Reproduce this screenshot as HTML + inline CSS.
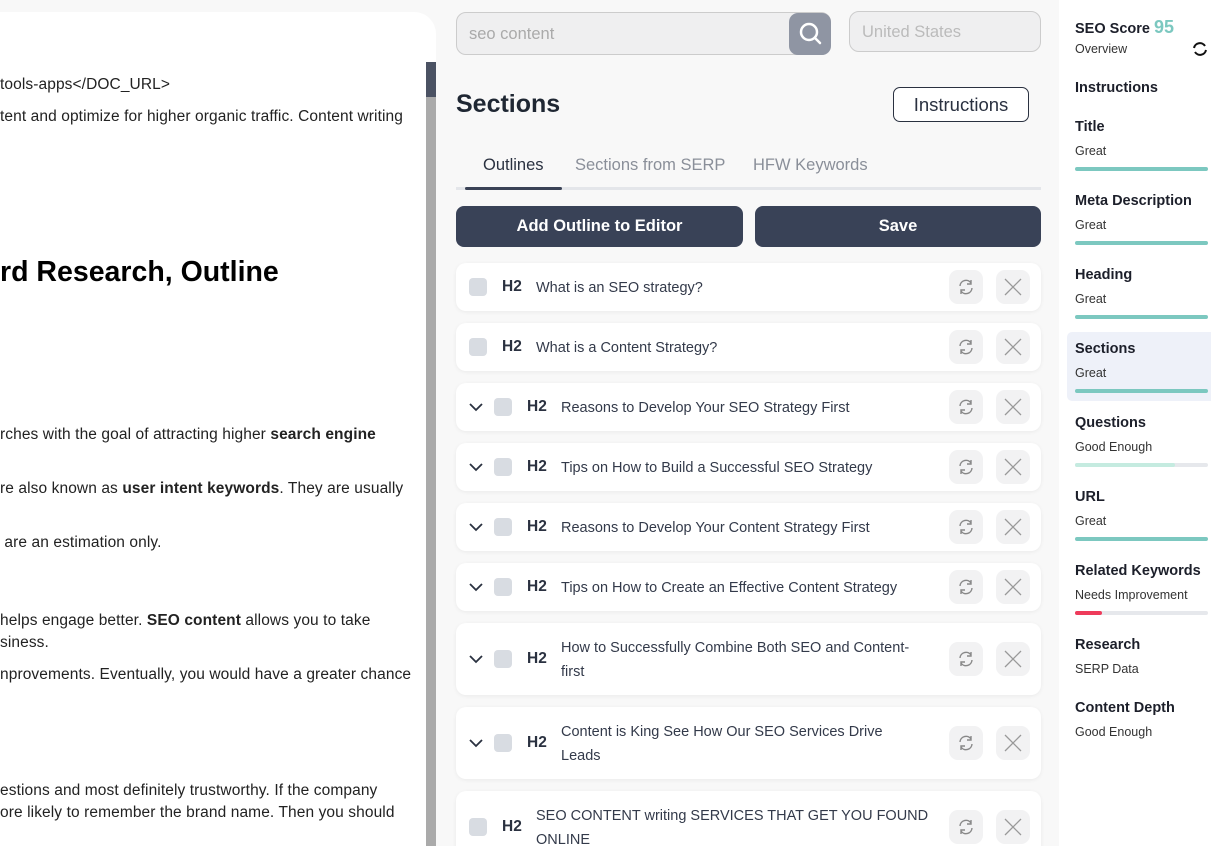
<!DOCTYPE html>
<html style="overflow:hidden;width:1211px;height:846px"><head><meta charset="utf-8"><style>
*{box-sizing:border-box;margin:0;padding:0}
body{width:1211px;height:846px;overflow:hidden;background:#f8f8f8;font-family:"Liberation Sans",sans-serif;position:relative;color:#1f2430}
.a{position:absolute;white-space:nowrap}
.doc{position:absolute;left:0;top:12px;width:436px;height:834px;background:#fff;border-top-right-radius:22px;overflow:hidden}
.p{position:absolute;left:0;font-size:15.5px;letter-spacing:0.1px;color:#222;white-space:nowrap}
.row{position:absolute;left:456px;width:585px;background:#fff;border-radius:10px;box-shadow:0 1px 4px rgba(0,0,0,.06)}
.cb{position:absolute;width:18px;height:18px;background:#d8dce2;border-radius:4px}
.h2{position:absolute;font-weight:bold;font-size:15.5px;color:#2a3140}
.t{position:absolute;font-size:14.5px;color:#333a4a;line-height:24px}
.sb{position:absolute;left:1075px;font-size:14.5px;font-weight:bold;color:#1c1f2a}
.ss{position:absolute;left:1075px;font-size:12.5px;color:#333}
.bar{position:absolute;left:1075px;width:133px;height:4px;border-radius:2px;background:#e6e8ec}
</style></head><body>
<div class="doc">
 <div style="position:absolute;left:426px;top:50px;width:10px;height:800px;background:#aaa"></div>
 <div style="position:absolute;left:426px;top:50px;width:10px;height:35px;background:#4b5263"></div>
 <div class="p" style="top:64px">tools-apps&lt;/DOC_URL&gt;</div>
 <div class="p" style="top:96px">tent and optimize for higher organic traffic. Content writing</div>
 <div class="p" style="top:244px;font-size:28.5px;font-weight:bold;color:#000;letter-spacing:0">rd Research, Outline</div>
 <div class="p" style="top:414px">rches with the goal of attracting higher <b>search engine</b></div>
 <div class="p" style="top:468px">re also known as <b>user intent keywords</b>. They are usually</div>
 <div class="p" style="top:522px">&nbsp;are an estimation only.</div>
 <div class="p" style="top:600px">helps engage better. <b>SEO content</b> allows you to take</div>
 <div class="p" style="top:622px">siness.</div>
 <div class="p" style="top:654px">nprovements. Eventually, you would have a greater chance</div>
 <div class="p" style="top:770px">estions and most definitely trustworthy. If the company</div>
 <div class="p" style="top:792px">ore likely to remember the brand name. Then you should</div>
</div>

<div class="a" style="left:456px;top:12px;width:375px;height:43px;background:#efeff0;border:1px solid #ccc;border-radius:10px"></div>
<div class="a" style="left:469px;top:25px;font-size:16.5px;color:#aaa">seo content</div>
<div class="a" style="left:789px;top:13px;width:42px;height:42px;background:#8f95a3;border-radius:9px"><svg width="42" height="42"><circle cx="20" cy="19" r="8" fill="none" stroke="#fff" stroke-width="2.5"/><path d="M26 25l5 5" stroke="#fff" stroke-width="2.5" stroke-linecap="round"/></svg></div>
<div class="a" style="left:849px;top:11px;width:192px;height:41px;background:#efeff0;border:1px solid #ccc;border-radius:10px"></div>
<div class="a" style="left:862px;top:23px;font-size:16.5px;color:#bbb">United States</div>

<div class="a" style="left:456px;top:90px;font-size:25px;font-weight:bold;color:#1f2733">Sections</div>
<div class="a" style="left:893px;top:87px;width:136px;height:35px;border:1px solid #2a3140;border-radius:7px;font-size:18.5px;color:#2a3140;text-align:center;line-height:33px;background:#fff">Instructions</div>

<div class="a" style="left:483px;top:156px;font-size:16.5px;color:#2a3140">Outlines</div>
<div class="a" style="left:575px;top:156px;font-size:16.5px;color:#8a8f99">Sections from SERP</div>
<div class="a" style="left:753px;top:156px;font-size:16.5px;color:#8a8f99">HFW Keywords</div>
<div class="a" style="left:456px;top:187px;width:585px;height:3px;background:#e4e6ea"></div>
<div class="a" style="left:465px;top:187px;width:97px;height:3px;background:#3a4256;border-radius:2px"></div>

<div class="a" style="left:456px;top:206px;width:287px;height:41px;background:#394257;border-radius:8px;color:#fff;font-size:16.5px;font-weight:bold;text-align:center;line-height:41px">Add Outline to Editor</div>
<div class="a" style="left:755px;top:206px;width:286px;height:41px;background:#394257;border-radius:8px;color:#fff;font-size:16.5px;font-weight:bold;text-align:center;line-height:41px">Save</div>

<div class="row" style="top:263px;height:48px"><div class="cb" style="left:13px;top:15px"></div><div class="h2" style="left:46px;top:15px">H2</div><div class="t" style="left:80px;top:13px">What is an SEO strategy?</div></div>
<div class="row" style="top:323px;height:48px"><div class="cb" style="left:13px;top:15px"></div><div class="h2" style="left:46px;top:15px">H2</div><div class="t" style="left:80px;top:13px">What is a Content Strategy?</div></div>
<div class="row" style="top:383px;height:48px"><div class="cb" style="left:38px;top:15px"></div><div class="h2" style="left:71px;top:15px">H2</div><div class="t" style="left:105px;top:13px">Reasons to Develop Your SEO Strategy First</div></div>
<div class="row" style="top:443px;height:48px"><div class="cb" style="left:38px;top:15px"></div><div class="h2" style="left:71px;top:15px">H2</div><div class="t" style="left:105px;top:13px">Tips on How to Build a Successful SEO Strategy</div></div>
<div class="row" style="top:503px;height:48px"><div class="cb" style="left:38px;top:15px"></div><div class="h2" style="left:71px;top:15px">H2</div><div class="t" style="left:105px;top:13px">Reasons to Develop Your Content Strategy First</div></div>
<div class="row" style="top:563px;height:48px"><div class="cb" style="left:38px;top:15px"></div><div class="h2" style="left:71px;top:15px">H2</div><div class="t" style="left:105px;top:13px">Tips on How to Create an Effective Content Strategy</div></div>
<div class="row" style="top:623px;height:72px"><div class="cb" style="left:38px;top:27px"></div><div class="h2" style="left:71px;top:27px">H2</div><div class="t" style="left:105px;top:13px">How to Successfully Combine Both SEO and Content-<br>first</div></div>
<div class="row" style="top:707px;height:72px"><div class="cb" style="left:38px;top:27px"></div><div class="h2" style="left:71px;top:27px">H2</div><div class="t" style="left:105px;top:13px">Content is King See How Our SEO Services Drive<br>Leads</div></div>
<div class="row" style="top:791px;height:72px"><div class="cb" style="left:13px;top:27px"></div><div class="h2" style="left:46px;top:27px">H2</div><div class="t" style="left:80px;top:13px">SEO CONTENT writing SERVICES THAT GET YOU FOUND<br>ONLINE</div></div>

<svg class="a" style="left:0;top:0" width="1211" height="846">
<defs>
<g id="ref"><path d="M-6 -1a6 6 0 0 1 11-3M6 1a6 6 0 0 1 -11 3" fill="none" stroke="#888" stroke-width="1.4"/><path d="M5 -7v4h-4M-5 7v-4h4" fill="none" stroke="#888" stroke-width="1.4"/></g>
<g id="x"><path d="M-8 -8L8 8M8 -8L-8 8" stroke="#999" stroke-width="1.3"/></g>
<path id="ch" d="M-6 -3l6 6 6-6" fill="none" stroke="#2a3140" stroke-width="1.8"/>
</defs>
<g fill="#f2f2f3">
<rect x="949" y="270" width="34" height="34" rx="9"/><rect x="996" y="270" width="34" height="34" rx="9"/>
<rect x="949" y="330" width="34" height="34" rx="9"/><rect x="996" y="330" width="34" height="34" rx="9"/>
<rect x="949" y="390" width="34" height="34" rx="9"/><rect x="996" y="390" width="34" height="34" rx="9"/>
<rect x="949" y="450" width="34" height="34" rx="9"/><rect x="996" y="450" width="34" height="34" rx="9"/>
<rect x="949" y="510" width="34" height="34" rx="9"/><rect x="996" y="510" width="34" height="34" rx="9"/>
<rect x="949" y="570" width="34" height="34" rx="9"/><rect x="996" y="570" width="34" height="34" rx="9"/>
<rect x="949" y="642" width="34" height="34" rx="9"/><rect x="996" y="642" width="34" height="34" rx="9"/>
<rect x="949" y="726" width="34" height="34" rx="9"/><rect x="996" y="726" width="34" height="34" rx="9"/>
<rect x="949" y="810" width="34" height="34" rx="9"/><rect x="996" y="810" width="34" height="34" rx="9"/>
</g>
<use href="#ref" x="966" y="287"/><use href="#x" x="1013" y="287"/>
<use href="#ref" x="966" y="347"/><use href="#x" x="1013" y="347"/>
<use href="#ref" x="966" y="407"/><use href="#x" x="1013" y="407"/>
<use href="#ref" x="966" y="467"/><use href="#x" x="1013" y="467"/>
<use href="#ref" x="966" y="527"/><use href="#x" x="1013" y="527"/>
<use href="#ref" x="966" y="587"/><use href="#x" x="1013" y="587"/>
<use href="#ref" x="966" y="659"/><use href="#x" x="1013" y="659"/>
<use href="#ref" x="966" y="743"/><use href="#x" x="1013" y="743"/>
<use href="#ref" x="966" y="827"/><use href="#x" x="1013" y="827"/>
<use href="#ch" x="476" y="407"/><use href="#ch" x="476" y="467"/><use href="#ch" x="476" y="527"/><use href="#ch" x="476" y="587"/><use href="#ch" x="476" y="659"/><use href="#ch" x="476" y="743"/>
</svg>

<div class="a" style="left:1059px;top:0;width:152px;height:846px;background:#fff"></div>
<div class="a" style="left:1067px;top:332px;width:144px;height:69px;background:#eef1f9;border-radius:5px 0 0 5px"></div>
<div class="sb" style="top:17px">SEO Score <span style="color:#7cc8c0;font-size:18px">95</span></div>
<div class="ss" style="top:42px">Overview</div>
<svg class="a" style="left:1192px;top:41px" width="16" height="16"><path d="M2 7a6 6 0 0 1 11-2M14 9a6 6 0 0 1-11 2" fill="none" stroke="#111" stroke-width="2"/></svg>
<div class="sb" style="top:80px">Instructions</div>
<div class="sb" style="top:119px">Title</div><div class="ss" style="top:144px">Great</div><div class="bar" style="top:167px;background:#7cc8c0"></div>
<div class="sb" style="top:193px">Meta Description</div><div class="ss" style="top:218px">Great</div><div class="bar" style="top:241px;background:#7cc8c0"></div>
<div class="sb" style="top:267px">Heading</div><div class="ss" style="top:292px">Great</div><div class="bar" style="top:315px;background:#7cc8c0"></div>
<div class="sb" style="top:341px">Sections</div><div class="ss" style="top:366px">Great</div><div class="bar" style="top:389px;background:#7cc8c0"></div>
<div class="sb" style="top:415px">Questions</div><div class="ss" style="top:440px">Good Enough</div><div class="bar" style="top:463px"><div style="width:100px;height:4px;background:#c5ebe0;border-radius:2px"></div></div>
<div class="sb" style="top:489px">URL</div><div class="ss" style="top:514px">Great</div><div class="bar" style="top:537px;background:#7cc8c0"></div>
<div class="sb" style="top:563px">Related Keywords</div><div class="ss" style="top:588px">Needs Improvement</div><div class="bar" style="top:611px"><div style="width:27px;height:4px;background:#ee3b5b;border-radius:2px"></div></div>
<div class="sb" style="top:637px">Research</div><div class="ss" style="top:662px">SERP Data</div>
<div class="sb" style="top:700px">Content Depth</div><div class="ss" style="top:725px">Good Enough</div>
</body></html>
